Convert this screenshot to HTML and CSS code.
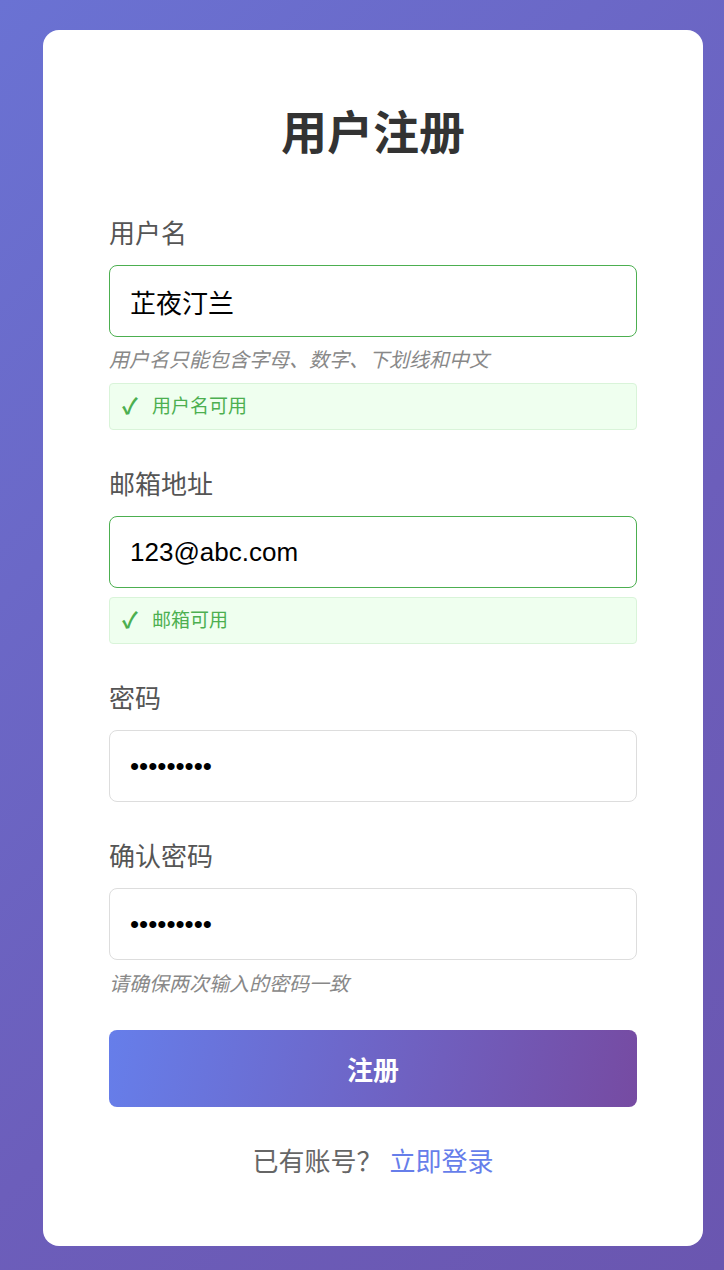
FILE: index.html
```html
<!DOCTYPE html>
<html lang="zh-CN">
  <head>
    <meta charset="UTF-8" />
    <meta name="viewport" content="width=device-width, initial-scale=1" />
    <title>用户注册</title>
    <link rel="stylesheet" href="styles.css">
  </head>
  <body>
    <div class="container">
      <h1>用户注册</h1>

      <form class="register-form">
        <div class="form-group">
          <label for="username">用户名</label>
          <input id="username" class="valid" type="text" value="芷夜汀兰" autocomplete="off" />
          <div class="hint">用户名只能包含字母、数字、下划线和中文</div>
          <div class="status success"><span class="check">✓</span>用户名可用</div>
        </div>

        <div class="form-group">
          <label for="email">邮箱地址</label>
          <input id="email" class="valid" type="email" value="123@abc.com" autocomplete="off" />
          <div class="status success"><span class="check">✓</span>邮箱可用</div>
        </div>

        <div class="form-group">
          <label for="password">密码</label>
          <input id="password" type="password" value="123456789" />
        </div>

        <div class="form-group">
          <label for="confirm">确认密码</label>
          <input id="confirm" type="password" value="123456789" />
          <div class="hint">请确保两次输入的密码一致</div>
        </div>

        <button type="submit" class="submit-btn">注册</button>
      </form>

      <p class="switch">已有账号？ <a href="#">立即登录</a></p>
    </div>
  </body>
</html>
```

FILE: styles.css
```css
* {
  box-sizing: border-box;
}

body {
  margin: 0;
  min-height: 100vh;
  padding: 30px 21px 24px 43px;
  font-family: "Liberation Sans", "Noto Sans CJK SC", sans-serif;
  background: linear-gradient(135deg, #6a72d3 0%, #6c5ebb 60%, #6a56b0 100%);
  color: #333;
}

.container {
  background: #fff;
  border-radius: 16px;
  padding: 76px 66px 66px;
}

h1 {
  margin: 0 0 56px;
  font-size: 46px;
  line-height: 54px;
  font-weight: 700;
  text-align: center;
  color: #333;
}

.form-group {
  margin-bottom: 37px;
}

.form-group label {
  display: block;
  margin-bottom: 13px;
  font-size: 26px;
  line-height: 36px;
  color: #555;
}

.form-group input {
  display: block;
  width: 100%;
  height: 72px;
  padding: 0 20px;
  border: 1px solid #ddd;
  border-radius: 8px;
  font-family: "Liberation Sans", "Noto Sans CJK SC", sans-serif;
  font-size: 26px;
  color: #000;
  background: #fff;
  outline: none;
}

.form-group input.valid {
  border-color: #4caf50;
}

.hint {
  margin-top: 9px;
  font-size: 20px;
  line-height: 28px;
  font-style: italic;
  color: #888;
}

.form-group input + .hint:last-child {
  margin-top: 10px;
}

.status {
  display: flex;
  align-items: center;
  height: 47px;
  margin-top: 9px;
  padding: 0 12px;
  border-radius: 4px;
  font-size: 19px;
  line-height: 27px;
}

.status.success {
  background: #efffef;
  border: 1px solid #d9f4d9;
  color: #4caf50;
}

.check {
  display: inline-block;
  width: 30px;
  font-size: 22px;
  font-weight: 700;
}

.submit-btn {
  display: block;
  width: 100%;
  height: 77px;
  margin-top: -5px;
  border: none;
  border-radius: 8px;
  background: linear-gradient(100deg, #667eea 0%, #764ba2 100%);
  color: #fff;
  font-family: "Liberation Sans", "Noto Sans CJK SC", sans-serif;
  font-size: 26px;
  font-weight: 700;
  cursor: pointer;
}

.switch {
  margin: 37px 0 0;
  text-align: center;
  font-size: 26px;
  line-height: 36px;
  color: #666;
}

.switch a {
  color: #667eea;
  text-decoration: none;
}
```
